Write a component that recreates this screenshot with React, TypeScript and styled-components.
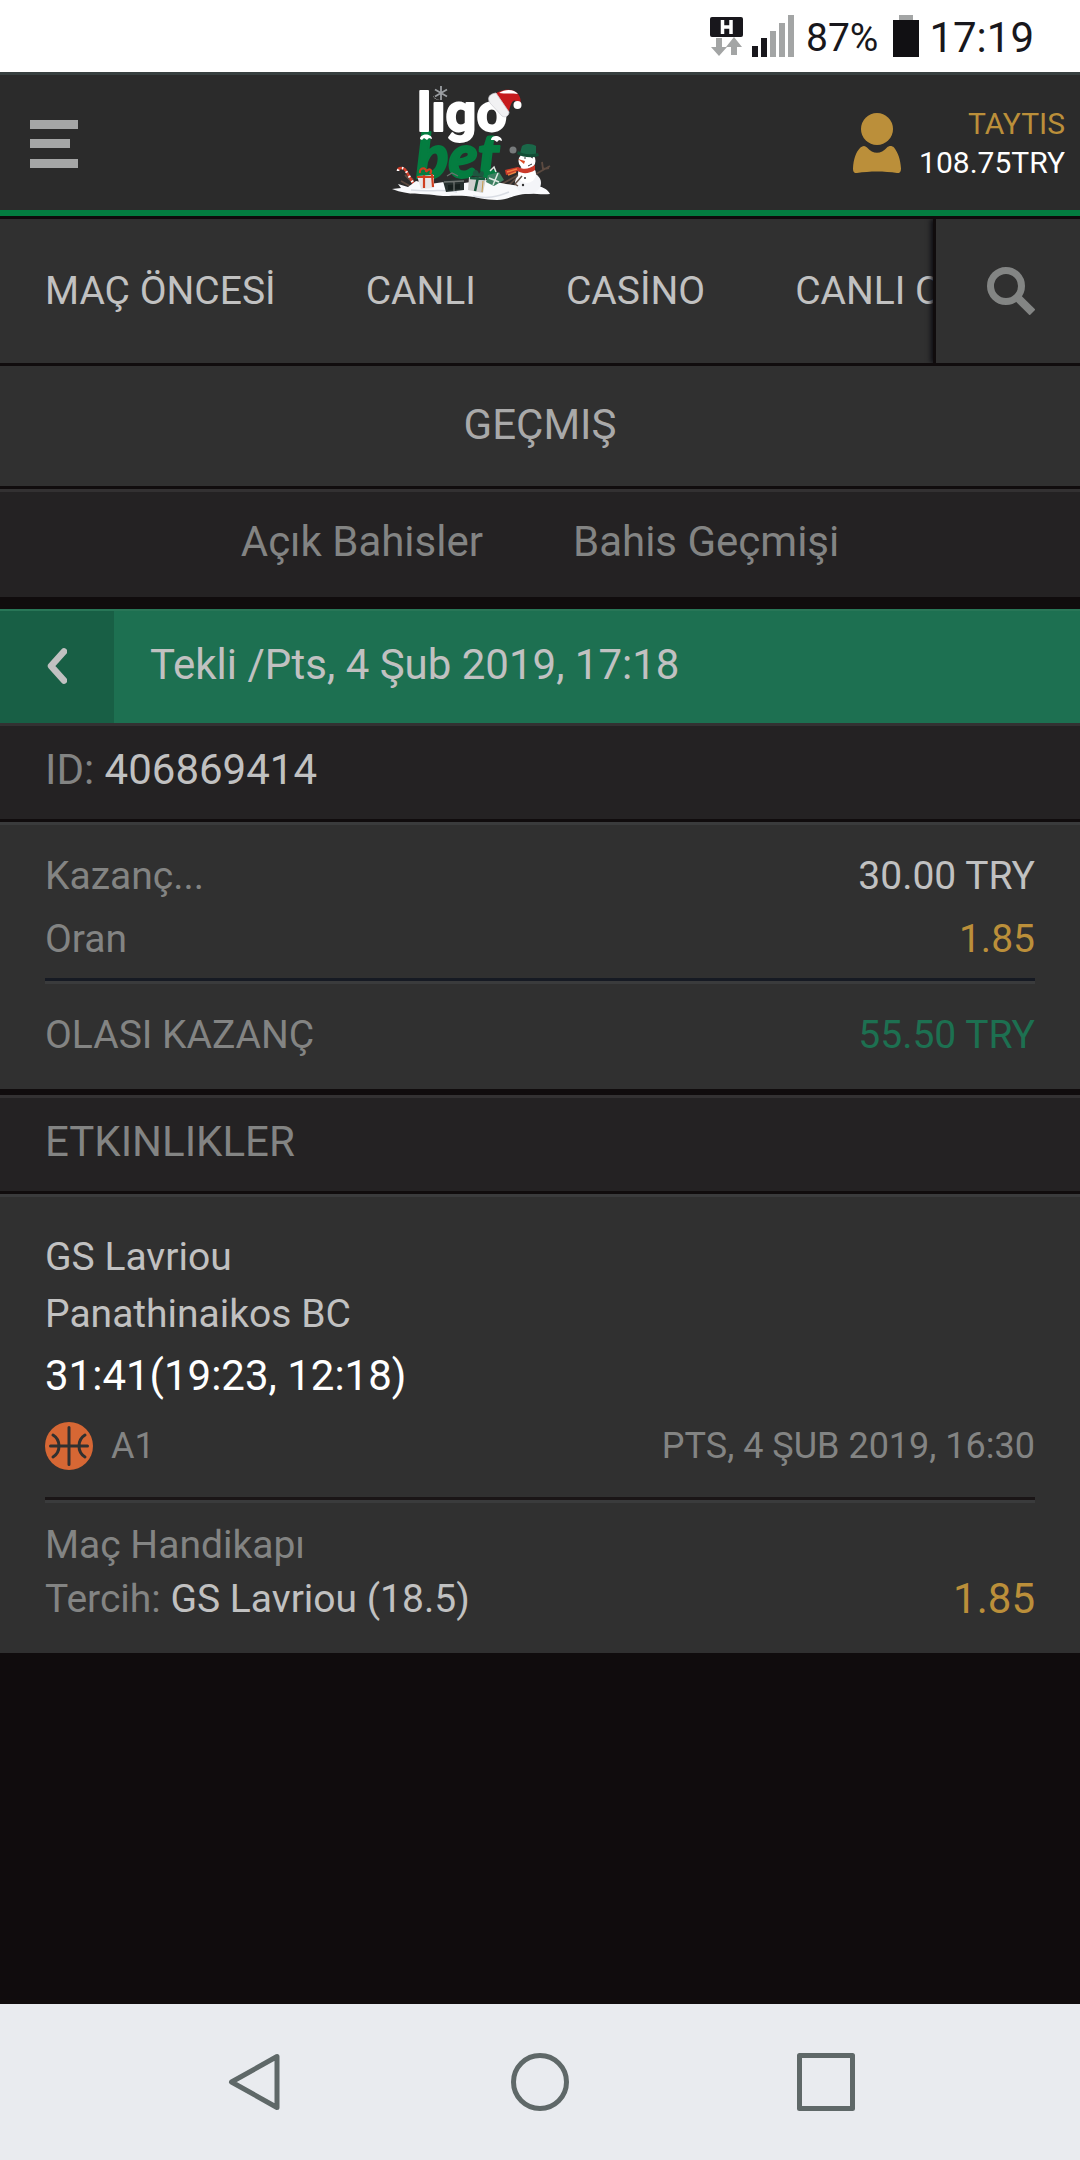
import React from "react";
import styled, { createGlobalStyle } from "styled-components";

const color = {
  ink: "#100c0d",
  header: "#2b2b2b",
  panel: "#303030",
  dark: "#242223",
  edge: "#3a3b3c",
  darkEdge: "#333132",
  text: "#c1c1c1",
  muted: "#838483",
  gold: "#bb8f3a",
  brand: "#047d40",
  green: "#1d7051",
  greenDeep: "#185f45",
};

const GlobalStyle = createGlobalStyle`
  * { box-sizing: border-box; }
  body { margin: 0; background: ${color.ink}; }
  h1, h2, p, dl, dd, dt { margin: 0; font-weight: 400; }
  button { border: 0; padding: 0; margin: 0; background: none; font: inherit; color: inherit; cursor: pointer; }
  a { color: inherit; text-decoration: none; }
  svg { display: block; flex: none; }
`;

const Screen = styled.div`
  display: flex;
  flex-direction: column;
  min-height: 100vh;
  background: ${color.ink};
  color: ${color.text};
  font-family: Roboto, "Liberation Sans", sans-serif;
  font-size: 39px;
`;

const StatusBar = styled.div`
  display: flex;
  justify-content: flex-end;
  align-items: center;
  height: 72px;
  padding: 0 46px 0 0;
  background: #fff;
  color: #18171c;
  line-height: 48px;
`;

const Battery = styled.span`
  margin: 0 15px 0 11px;
  padding-top: 4px;
`;

const Clock = styled.span`
  margin-left: 10px;
  padding-top: 4px;
  font-size: 42px;
`;

const Header = styled.header`
  display: flex;
  align-items: center;
  height: 147px;
  background: ${color.header};
  border-top: 3px solid #384040;
  border-bottom: 3px solid ${color.ink};
  box-shadow: inset 0 -6px ${color.brand};
  padding-bottom: 6px;
`;

const MenuButton = styled.button`
  display: flex;
  padding: 31px 30px 29px;
`;

const LogoLink = styled.a`
  display: flex;
  flex: 1;
  justify-content: center;
`;

const Account = styled.button`
  display: flex;
  align-items: center;
  gap: 18px;
  padding: 0 15px 0 20px;
  text-align: right;
  font-size: 30px;
  line-height: 39px;
`;

const AccountText = styled.span<{ $tone: string }>`
  display: block;
  color: ${(p) => p.$tone};
`;

const TopNav = styled.nav`
  display: flex;
  height: 147px;
  background: ${color.panel};
  border-bottom: 3px solid ${color.ink};
`;

const NavLinks = styled.div`
  display: flex;
  flex: 1;
  min-width: 0;
  overflow: hidden;
`;

const NavLink = styled.a`
  flex: none;
  padding: 0 45px;
  line-height: 144px;
  white-space: nowrap;
`;

const SearchButton = styled.button`
  display: flex;
  flex: none;
  align-items: center;
  padding: 0 45px 0 51px;
  border-left: 3px solid ${color.ink};
  box-shadow: -2px 0 5px #0c0c12;
  clip-path: inset(0 0 0 -9px);
`;

const PageTitle = styled.h1`
  padding-bottom: 2px;
  background: ${color.panel};
  border-bottom: 3px solid ${color.ink};
  color: #a9a9a9;
  font-size: 42px;
  line-height: 118px;
  text-align: center;
`;

const SubNav = styled.nav`
  display: flex;
  justify-content: center;
  gap: 90px;
  padding-bottom: 6px;
  margin-bottom: 12px;
  background: ${color.dark};
  border-top: 3px solid ${color.darkEdge};
  color: ${color.muted};
  font-size: 42px;
  line-height: 99px;
`;

const BetBar = styled.div`
  display: flex;
  align-items: stretch;
  height: 114px;
  background: ${color.green};
  border-top: 2px solid #287657;
`;

const BackButton = styled.button`
  display: flex;
  align-items: center;
  justify-content: center;
  width: 114px;
  padding-bottom: 2px;
  background: ${color.greenDeep};
`;

const BetTitle = styled.h2`
  padding: 0 36px;
  font-size: 42px;
  line-height: 108px;
`;

const Strip = styled.div`
  padding: 0 45px 5px;
  background: ${color.dark};
  border-top: 3px solid ${color.darkEdge};
  border-bottom: 3px solid ${color.ink};
  color: ${color.muted};
  font-size: 42px;
  line-height: 88px;
`;

const StripTitle = styled(Strip).attrs({ as: "h2" })``;

const Bright = styled.span`
  color: ${color.text};
`;

const Panel = styled.section`
  padding: 0 45px;
  background: ${color.panel};
  border-top: 3px solid ${color.edge};
`;

const Summary = styled(Panel)`
  margin-bottom: 6px;
`;

const Group = styled.dl<{ $bottom: number }>`
  padding: 20px 0 ${(p) => p.$bottom}px;
`;

const Row = styled.div<{ $line: number }>`
  display: flex;
  justify-content: space-between;
  line-height: ${(p) => p.$line}px;
  color: ${color.muted};
`;

const Value = styled.dd<{ $tone: string }>`
  color: ${(p) => p.$tone};
`;

const Divider = styled.hr<{ $tone: string }>`
  height: 6px;
  margin: 0;
  border: 0;
  border-top: 3px solid ${(p) => p.$tone};
  border-bottom: 3px solid ${color.edge};
`;

const Match = styled.div`
  padding: 32px 0 27px;
  line-height: 57px;
`;

const Score = styled.p`
  color: #fff;
  font-size: 42px;
  line-height: 66px;
`;

const MatchMeta = styled.div`
  display: flex;
  align-items: center;
  gap: 18px;
  margin-top: 13px;
  color: ${color.muted};
  font-size: 36px;
  line-height: 48px;
`;

const Kickoff = styled.time`
  margin-left: auto;
`;

const Pick = styled.div`
  padding: 15px 0 27px;
  color: ${color.muted};
  line-height: 54px;
`;

const Odds = styled.span`
  color: ${color.gold};
  font-size: 42px;
`;

const SystemNav = styled.nav`
  display: flex;
  align-items: center;
  height: 156px;
  margin-top: auto;
  padding: 0 111px;
  background: #e9ebef;
`;

const SystemButton = styled.button`
  display: flex;
  flex: 1;
  justify-content: center;
`;

function NetworkIcon() {
  return (
    <svg width="85" height="44" viewBox="710 14 85 44" aria-label="H" role="img">
      <rect x="710" y="17" width="33" height="20" rx="2" fill="#18171c" />
      <path d="M722.5 20v14M731 20v14M722.5 27h8.500" stroke="#fff" strokeWidth="3.500" fill="none" />
      <path d="M716 38h6v9h5l-8 9-8-9h5zM731 55h6v-8h5l-8-10-8 10h5z" fill="#a3a5a5" />
      <path d="M752 46h6v11h-6zM761 38h6v19h-6z" fill="#18171c" />
      <path d="M770 31h6v26h-6zM779 23h6v34h-6zM788 15h6v42h-6z" fill="#a3a5a5" />
    </svg>
  );
}

function BatteryIcon() {
  return (
    <svg width="26" height="44" viewBox="0 0 26 44" aria-hidden="true">
      <path d="M6 1h14v5H6z" fill="#a3a5a5" />
      <path d="M0 6h26v37H0z" fill="#111013" />
    </svg>
  );
}

function Logo() {
  return (
    <svg width="160" height="135" viewBox="20 5 160 135" aria-label="ligobet" role="img">
      <text fontWeight="700" strokeLinejoin="round">
        <tspan x="45" y="108" fontFamily="Lato, sans-serif" fontWeight="900" fontSize="60" fontStyle="italic" fill={color.brand} stroke={color.brand} strokeWidth="2">bet</tspan>
        <tspan x="46" y="61" fontFamily="Roboto, sans-serif" fontSize="54" fontStyle="normal" fill="#fff" stroke="#fff" strokeWidth="2">ligo</tspan>
      </text>
      {/* snowflake in place of the dot */}
      <circle cx="69" cy="22" r="8" fill={color.header} />
      <path d="M70 16v14M64 19.500l12 7M64 26.500l12-7" stroke="#9b9ea2" strokeWidth="1.800" fill="none" />
      {/* hat */}
      <path d="M122 26c6-7 20-9 25-2 3 4 3 7 2 10l-4-3c-3-2-5 2-7 10l-4 2z" fill="#c61a1d" />
      <path d="M128 23c6-4 15-4 19 1-6-1-13 0-19-1z" fill="#fff" />
      <path d="M125 23c-7 1-9 5-6 10l12 13c3 2 7 0 7-4z" fill="#f1f1f3" stroke="#cfcfd4" strokeWidth="0.800" />
      <circle cx="146.500" cy="35" r="4" fill="#fff" />
      {/* snow caps */}
      <path d="M49 69c0-6 12-6 12 0l-3-1-2 2-3-2-2 2zM120 70c0-6 11-5 11 1l-3-1-2 2-3-2z" fill="#fff" />
      <circle cx="142" cy="80" r="3.500" fill="#777a7b" />
      {/* branches and candy cane */}
      <path d="M34 105l17 17M41 108l5 12M30 111l16 9M165 104l14-8M172 99l-1-7M172 99l6-1M151 103l-16 15M147 105l-16 9" stroke="#5c4a40" strokeWidth="1.800" fill="none" />
      <path d="M27 101c0-4 6-4 8 0l9 15" stroke="#d0402c" strokeWidth="2.500" fill="none" />
      <path d="M27 101c0-4 6-4 8 0l9 15" stroke="#fff" strokeWidth="2.500" strokeDasharray="1.500 4" fill="none" />
      {/* snow */}
      <path d="M21 119l9-1-3-4 10 3 8-6 14 3 14-2 20 1 22-3 20 4 14 2 16 0c5 0 12 3 14 8-9 1-17-1-25 0-12 1-17 6-28 6-13 0-19-3-31-4-13-1-20 1-32-1-12-2-24 1-42-6z" fill="#f9fafc" />
      <path d="M40 120c18 2 30-1 46 2M102 126c14 3 24 1 36-4" stroke="#d9dde4" strokeWidth="1.500" fill="none" />
      {/* red ribboned gift */}
      <path d="M46 106l17-1v13l-13 1z" fill="#e8e6e6" />
      <path d="M53 105v13M46 107h17M61 104l1 13M49 103c-1-6 7-6 6-1 3-5 7-2 4 2" stroke="#cf3f20" strokeWidth="2.200" fill="none" />
      {/* dark gift */}
      <path d="M72 111l13-3 8 2v10l-18 2z" fill="#26302e" />
      <path d="M77 115l12-1v5l-12 1z" fill="#17201e" />
      <path d="M73 112l20-1M83 111v10M76 106l5-3 6 3" stroke="#6d7370" strokeWidth="1.300" fill="none" />
      {/* silver gift */}
      <path d="M98 107l17 1-3 15-15-3z" fill="#cfd0ce" />
      <path d="M107 107l-3 14M99 108l15 1" stroke="#17573b" strokeWidth="2.500" />
      <path d="M102 106c-1-7 5-8 6-2 2-5 7-3 4 3z" fill="#1d5840" />
      <path d="M112 111l-1 11" stroke="#c79948" strokeWidth="1" />
      {/* small green gift */}
      <path d="M117 105l11-3 5 8-10 6-8-4z" fill="#3d8061" />
      <path d="M118 108l10 4M127 103l-5 12M119 101l4-4 2 5" stroke="#dfe9e3" strokeWidth="1.500" fill="none" />
      {/* snowman */}
      <ellipse cx="157" cy="113" rx="13" ry="11" fill="#f4f5f8" />
      <circle cx="156" cy="104" r="9" fill="#fff" />
      <circle cx="156" cy="91" r="8.500" fill="#fff" />
      <path d="M149 83l2-7c4-3 11-2 14 0v8c-5 2-11 2-16-1z" fill="#1a6849" />
      <path d="M147 81c6 4 13 4 20 2l1 3c-7 2-15 2-22-2z" fill="#124e36" />
      <path d="M147 97c6 3 11 2 17-2v5c-6 4-13 4-17 1l-12 4-1-5z" fill="#cb3a2a" />
      <path d="M136 102l10-3M137 105l8-3" stroke="#ef8140" strokeWidth="1.500" />
      <path d="M154 91l-7-2 6 5z" fill="#d94b24" />
      <path d="M154 87v2M160 87l2 1M157 96l4-2" stroke="#34383b" strokeWidth="1" />
      <circle cx="154" cy="108" r="1" fill="#333" />
      <circle cx="152" cy="115" r="1.200" fill="#333" />
      <path d="M151 106l-7 8 3 2" stroke="#665246" strokeWidth="1.500" fill="none" />
    </svg>
  );
}

function UserIcon() {
  return (
    <svg width="48" height="60" viewBox="0 0 48 60" fill={color.gold} aria-hidden="true">
      <circle cx="24" cy="16" r="16" />
      <path d="M11 33c1 0 2 .5 3 1.500 6 7 14 7 20 0 2-2 5-2 7 0 4 5 6.500 12 7 21 0 3-1 5-4 4.500-13-2-27-2-40 0-3 .5-4-1.500-4-4.500C.5 46 3 39 7 35c1-1 2.500-2 4-2z" />
    </svg>
  );
}

function Basketball() {
  return (
    <svg width="48" height="48" viewBox="0 0 48 48" aria-hidden="true">
      <circle cx="24" cy="24" r="24" fill="#d66734" />
      <path d="M24 5.500v37M5.500 24h37M8 13c8 5 8 17 0 22M40 13c-8 5-8 17 0 22" stroke="#303030" strokeWidth="3" strokeLinecap="round" fill="none" />
    </svg>
  );
}

const navItems = ["MAÇ ÖNCESİ", "CANLI", "CASİNO", "CANLI CASİNO"];

export default function App() {
  return (
    <Screen lang="tr">
      <GlobalStyle />
      <StatusBar>
        <NetworkIcon />
        <Battery>87%</Battery>
        <BatteryIcon />
        <Clock>17:19</Clock>
      </StatusBar>

      <Header>
        <MenuButton aria-label="Menü">
          <svg width="48" height="48" viewBox="0 0 48 48" fill="#a5a6a6">
            <path d="M0 0h48v9H0zM0 19h40v9H0zM0 39h48v9H0z" />
          </svg>
        </MenuButton>
        <LogoLink href="#"><Logo /></LogoLink>
        <Account>
          <UserIcon />
          <span>
            <AccountText $tone={color.gold}>TAYTIS</AccountText>
            <AccountText $tone="#fff">108.75TRY</AccountText>
          </span>
        </Account>
      </Header>

      <TopNav>
        <NavLinks>
          {navItems.map((item) => (
            <NavLink key={item} href="#">{item}</NavLink>
          ))}
        </NavLinks>
        <SearchButton aria-label="Ara">
          <svg width="48" height="48" viewBox="0 0 48 48" fill="none" stroke="#838584">
            <circle cx="19" cy="19" r="15.500" strokeWidth="7" />
            <path d="M30 30l15.500 15.500" strokeWidth="8" />
          </svg>
        </SearchButton>
      </TopNav>

      <PageTitle>GEÇMIŞ</PageTitle>
      <SubNav>
        <a href="#">Açık Bahisler</a>
        <a href="#">Bahis Geçmişi</a>
      </SubNav>

      <main>
        <BetBar>
          <BackButton aria-label="Geri">
            <svg width="20" height="36" viewBox="0 0 20 36" fill="none" stroke={color.text}>
              <path d="M17 3.500L4 18l13 14.500" strokeWidth="6.500" strokeLinecap="round" strokeLinejoin="round" />
            </svg>
          </BackButton>
          <BetTitle>Tekli /Pts, 4 Şub 2019, 17:18</BetTitle>
        </BetBar>
        <Strip>ID: <Bright>406869414</Bright></Strip>

        <Summary>
          <Group $bottom={7}>
            <Row $line={63}><dt>Kazanç...</dt><Value $tone={color.text}>30.00 TRY</Value></Row>
            <Row $line={63}><dt>Oran</dt><Value $tone={color.gold}>1.85</Value></Row>
          </Group>
          <Divider $tone="#161a23" />
          <Group $bottom={22}>
            <Row $line={63}><dt>OLASI KAZANÇ</dt><Value $tone={color.green}>55.50 TRY</Value></Row>
          </Group>
        </Summary>

        <StripTitle>ETKINLIKLER</StripTitle>
        <Panel>
          <Match>
            <p>GS Lavriou</p>
            <p>Panathinaikos BC</p>
            <Score>31:41(19:23, 12:18)</Score>
            <MatchMeta>
              <Basketball />
              <span>A1</span>
              <Kickoff dateTime="2019-02-04T16:30">PTS, 4 ŞUB 2019, 16:30</Kickoff>
            </MatchMeta>
          </Match>
          <Divider $tone="#1a1516" />
          <Pick>
            <p>Maç Handikapı</p>
            <Row $line={54}>
              <span>Tercih: <Bright>GS Lavriou (18.5)</Bright></span>
              <Odds>1.85</Odds>
            </Row>
          </Pick>
        </Panel>
      </main>

      <SystemNav>
        <SystemButton aria-label="Geri">
          <svg width="52" height="58" viewBox="0 0 52 58" fill="none" stroke="#5f6868">
            <path d="M49 3.500v51L3.500 29z" strokeWidth="5" strokeLinejoin="round" />
          </svg>
        </SystemButton>
        <SystemButton aria-label="Ana ekran">
          <svg width="58" height="58" viewBox="0 0 58 58" fill="none" stroke="#5f6868">
            <circle cx="29" cy="29" r="26.500" strokeWidth="5" />
          </svg>
        </SystemButton>
        <SystemButton aria-label="Son uygulamalar">
          <svg width="58" height="58" viewBox="0 0 58 58" fill="none" stroke="#5f6868">
            <rect x="2.500" y="2.500" width="53" height="53" strokeWidth="5" strokeLinejoin="round" />
          </svg>
        </SystemButton>
      </SystemNav>
    </Screen>
  );
}
